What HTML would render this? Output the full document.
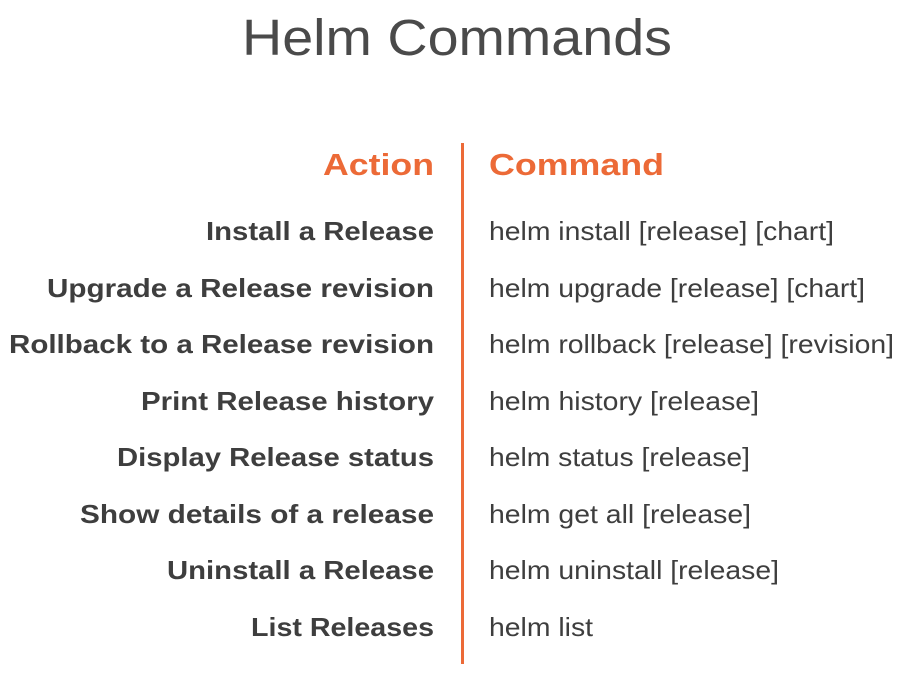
<!DOCTYPE html>
<html><head><meta charset="utf-8"><style>
html,body{margin:0;padding:0;background:#fff;}
svg{display:block}
</style></head><body>
<svg width="904" height="675" xmlns="http://www.w3.org/2000/svg">
<rect width="904" height="675" fill="#fff"/>
<text x="242" y="55" font-family="Liberation Sans, sans-serif" font-size="51" fill="#4a4a4a" textLength="430" lengthAdjust="spacingAndGlyphs">Helm Commands</text>
<rect x="461" y="143" width="3" height="521" fill="#ec6a37"/>
<g font-family="Liberation Sans, sans-serif" font-weight="bold" font-size="31" fill="#ec6a37">
<text x="323" y="175" textLength="111" lengthAdjust="spacingAndGlyphs">Action</text>
<text x="489" y="175" textLength="175" lengthAdjust="spacingAndGlyphs">Command</text>
</g>
<g font-family="Liberation Sans, sans-serif" font-weight="bold" font-size="26" fill="#3e3e3e" text-anchor="end">
<text x="434" y="240" textLength="228" lengthAdjust="spacingAndGlyphs">Install a Release</text>
<text x="434" y="297" textLength="387" lengthAdjust="spacingAndGlyphs">Upgrade a Release revision</text>
<text x="434" y="353" textLength="425" lengthAdjust="spacingAndGlyphs">Rollback to a Release revision</text>
<text x="434" y="410" textLength="293" lengthAdjust="spacingAndGlyphs">Print Release history</text>
<text x="434" y="466" textLength="317" lengthAdjust="spacingAndGlyphs">Display Release status</text>
<text x="434" y="523" textLength="354" lengthAdjust="spacingAndGlyphs">Show details of a release</text>
<text x="434" y="579" textLength="267" lengthAdjust="spacingAndGlyphs">Uninstall a Release</text>
<text x="434" y="636" textLength="183" lengthAdjust="spacingAndGlyphs">List Releases</text>
</g>
<g font-family="Liberation Sans, sans-serif" font-size="26" fill="#3e3e3e">
<text x="489" y="240" textLength="345" lengthAdjust="spacingAndGlyphs">helm install [release] [chart]</text>
<text x="489" y="297" textLength="376" lengthAdjust="spacingAndGlyphs">helm upgrade [release] [chart]</text>
<text x="489" y="353" textLength="405" lengthAdjust="spacingAndGlyphs">helm rollback [release] [revision]</text>
<text x="489" y="410" textLength="270" lengthAdjust="spacingAndGlyphs">helm history [release]</text>
<text x="489" y="466" textLength="261" lengthAdjust="spacingAndGlyphs">helm status [release]</text>
<text x="489" y="523" textLength="262" lengthAdjust="spacingAndGlyphs">helm get all [release]</text>
<text x="489" y="579" textLength="290" lengthAdjust="spacingAndGlyphs">helm uninstall [release]</text>
<text x="489" y="636" textLength="104" lengthAdjust="spacingAndGlyphs">helm list</text>
</g>
</svg>
</body></html>
